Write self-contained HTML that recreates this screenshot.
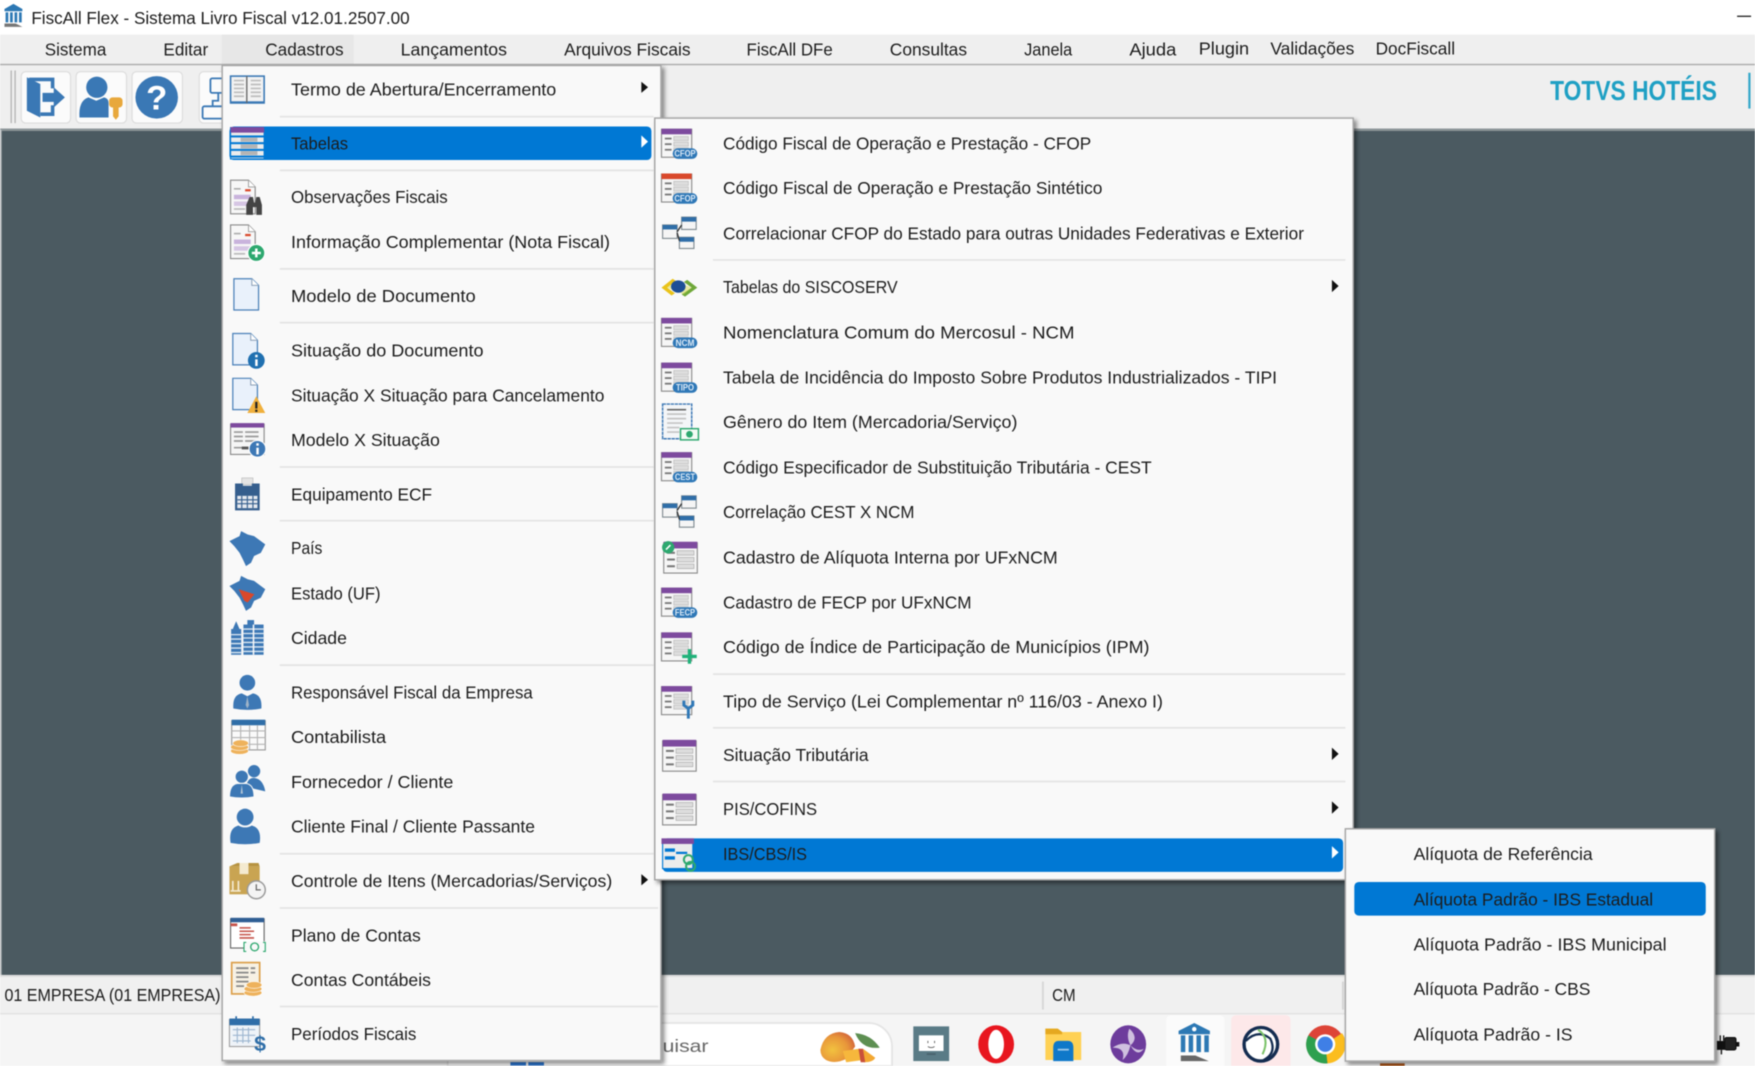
<!DOCTYPE html>
<html lang="pt-BR">
<head>
<meta charset="utf-8">
<title>FiscAll Flex - Sistema Livro Fiscal</title>
<style>
html,body{margin:0;padding:0;width:1755px;height:1066px;overflow:hidden;background:#fff}
svg{display:block;filter:blur(.4px)}
text{font-family:"Liberation Sans",sans-serif;font-size:16px;fill:#1c1c1c}
</style>
</head>
<body>
<svg xmlns="http://www.w3.org/2000/svg" width="1755" height="1066" viewBox="0 0 1568 952.4" preserveAspectRatio="none">
<defs>
<filter id="sh" x="-5%" y="-5%" width="110%" height="110%"><feDropShadow dx="2.5" dy="2.5" stdDeviation="2" flood-color="#000" flood-opacity=".45"/></filter>
<radialGradient id="mg" cx=".35" cy=".6" r=".8"><stop offset="0" stop-color="#f2c23f"/><stop offset=".55" stop-color="#e8963a"/><stop offset="1" stop-color="#c9503a"/></radialGradient>
<g id="tb">
 <rect x="-15" y="-12.5" width="27" height="25" fill="#f6f6f6" stroke="#8a8a8a"/>
 <rect x="-15" y="-13" width="27" height="5" fill="currentColor"/>
 <g fill="#777"><rect x="-12" y="-5" width="6" height="1.6"/><rect x="-12" y="0" width="6" height="1.6"/><rect x="-12" y="5" width="6" height="1.6"/></g>
 <g fill="#ddd" stroke="#bbb" stroke-width=".6"><rect x="-4" y="-6" width="13" height="3.6"/><rect x="-4" y="-1" width="13" height="3.6"/><rect x="-4" y="4" width="13" height="3.6"/></g>
</g>
<g id="bd"><rect x="-5" y="4.5" width="22" height="9.5" rx="4.7" fill="#2f78b7"/></g>
<g id="tw">
 <rect x="-15" y="-13" width="30" height="27" fill="#f6f6f6" stroke="#8a8a8a"/>
 <rect x="-15" y="-14" width="30" height="6" fill="#7d4a9e"/>
 <g fill="#777"><rect x="-12" y="-5" width="7" height="1.8"/><rect x="-12" y="1" width="7" height="1.8"/><rect x="-12" y="7" width="7" height="1.8"/></g>
 <g fill="#ddd" stroke="#aaa" stroke-width=".6"><rect x="-3" y="-6" width="15" height="4"/><rect x="-3" y="0" width="15" height="4"/><rect x="-3" y="6" width="15" height="4"/></g>
</g>
<g id="link">
 <g fill="#f5f5f5" stroke="#7f8a90"><rect x="-15" y="-7" width="13" height="12"/><rect x="2" y="-14" width="13" height="11"/><rect x="0" y="4" width="13" height="10"/></g>
 <g fill="#2f6ea8"><rect x="-15" y="-7" width="13" height="4"/><rect x="2" y="-14" width="13" height="4"/><rect x="0" y="4" width="13" height="4"/></g>
 <path d="M-2,-1 L2,-7 M-2,0 L0,7" stroke="#333" stroke-width="1.2" fill="none"/>
</g>
<g id="doc">
 <path d="M-12,-15 H4 L10,-9 V13 H-12 Z" fill="#e9f1fb" stroke="#4a80b8" stroke-width="1.1"/>
 <path d="M4,-15 V-9 H10" fill="#fff" stroke="#8a9eb5" stroke-width=".9"/>
</g>
<g id="dl">
 <path d="M-14,-15 H2 L8,-9 V15 H-14 Z" fill="#f7f7f7" stroke="#8a8a8a"/>
 <path d="M2,-15 V-9 H8" fill="#fff" stroke="#999" stroke-width=".8"/>
 <rect x="-11" y="-8" width="6" height="1.4" fill="#aaa"/><rect x="-1" y="-7" width="5" height="2" fill="#d9482b"/>
 <rect x="-11" y="-2" width="15" height="4" fill="#c9b3dc"/><rect x="-11" y="4" width="15" height="4" fill="#d6c6e4"/><rect x="-11" y="10" width="10" height="1.5" fill="#bbb"/>
</g>
<path id="br" d="M-16,-6.5 L-7,-11 L-5.600,-15.500 L.3,-12.500 L6,-11 L16,-3.600 L12,4 L6,6.800 L3.300,12.800 L-1.200,15.800 L-4,9.800 L-7,3.900 L-11.600,-2 Z" fill="#3d78b5"/>
<g id="pers">
 <circle cx="0" cy="-9" r="7" fill="#3d78b5"/>
 <path d="M-12.500,14 Q-13.500,2 -5,.5 L0,3 L5,.5 Q13.500,2 12.500,14 Q0,16.500 -12.500,14 Z" fill="#3d78b5"/>
</g>
<g id="coins" fill="#eeb25c" stroke="#fff" stroke-width=".5">
 <ellipse cx="0" cy="6" rx="8" ry="3"/><ellipse cx="0" cy="2.5" rx="8" ry="3"/><ellipse cx="1" cy="-1" rx="7" ry="3"/>
</g>
</defs>

<!-- base -->
<rect width="1568" height="31" fill="#fff"/>
<rect y="31" width="1568" height="26" fill="#efefef"/>
<rect x="198" y="31" width="118" height="27" fill="#e7e7e7"/>
<rect y="57" width="1568" height="1.4" fill="#acacac"/>
<rect y="58.4" width="1568" height="57" fill="#efefef"/>
<rect y="115" width="1568" height="757" fill="#4b5a61"/>
<rect y="115" width="1568" height="2" fill="#8d9598"/>
<rect y="116" width="1.5" height="756" fill="#b8bcbe"/>
<rect y="871" width="1568" height="2.5" fill="#dfdfdf"/>
<rect y="873" width="1568" height="32" fill="#f0f0f0"/>
<rect y="905" width="1568" height="1.6" fill="#e3e3e3"/>
<rect y="906.500" width="1568" height="46" fill="#f5f5f5"/>

<!-- title -->
<path d="M4,8 L12,3.500 L20,8 V10 H4 Z" fill="#2c78b4"/>
<g fill="#2c78b4"><rect x="5" y="11" width="2.400" height="9"/><rect x="9" y="11" width="2.400" height="9"/><rect x="13" y="11" width="2.400" height="9"/><rect x="17" y="11" width="2.400" height="9"/></g>
<path d="M4,21 H14 L20,24 H4 Z" fill="#777"/>
<text x="28" y="21.500" textLength="338" lengthAdjust="spacingAndGlyphs">FiscAll Flex - Sistema Livro Fiscal v12.01.2507.00</text>
<rect x="1552" y="14" width="12.500" height="1.100" fill="#111"/>

<!-- menubar -->
<text x="40" y="49.500" textLength="55" lengthAdjust="spacingAndGlyphs">Sistema</text>
<text x="146" y="49.500" textLength="40" lengthAdjust="spacingAndGlyphs">Editar</text>
<text x="237" y="49.500" textLength="70" lengthAdjust="spacingAndGlyphs">Cadastros</text>
<text x="358" y="49.500" textLength="95" lengthAdjust="spacingAndGlyphs">Lançamentos</text>
<text x="504" y="49.500" textLength="113" lengthAdjust="spacingAndGlyphs">Arquivos Fiscais</text>
<text x="667" y="49.500" textLength="77" lengthAdjust="spacingAndGlyphs">FiscAll DFe</text>
<text x="795" y="49.500" textLength="69" lengthAdjust="spacingAndGlyphs">Consultas</text>
<text x="915" y="49.500" textLength="43" lengthAdjust="spacingAndGlyphs">Janela</text>
<text x="1009" y="49.500" textLength="42" lengthAdjust="spacingAndGlyphs">Ajuda</text>
<text x="1071" y="48.500" textLength="45" lengthAdjust="spacingAndGlyphs">Plugin</text>
<text x="1135" y="48.500" textLength="75" lengthAdjust="spacingAndGlyphs">Validações</text>
<text x="1229" y="48.500" textLength="71" lengthAdjust="spacingAndGlyphs">DocFiscall</text>

<!-- toolbar -->
<path d="M10,63 V110 M13.500,63 V110" stroke="#b4b4b4" stroke-width="1.200"/>
<g fill="#fbfbfb" stroke="#dcdcdc">
 <rect x="19" y="64" width="44" height="46" rx="4"/>
 <rect x="68" y="64" width="45" height="46" rx="4"/>
 <rect x="118" y="64" width="45" height="46" rx="4"/>
 <rect x="178" y="64" width="40" height="46" rx="4"/>
</g>
<path d="M26,71 H47 V79 M47,94 V102 H36" fill="none" stroke="#3a78b5" stroke-width="3.200"/>
<polygon points="24,69 36,75 36,105 24,99" fill="#3a78b5"/>
<polygon points="38,83 48,83 48,78 58,87 48,96 48,91 38,91" fill="#3a78b5"/>
<circle cx="86.500" cy="78" r="9.500" fill="#3a78b5"/>
<path d="M71,105 Q70,90 79,87 L86,90 L93,87 Q97,88 97,92 V105 Z" fill="#3a78b5"/>
<rect x="97.500" y="87" width="12" height="9" rx="3" fill="#e8a83c"/>
<path d="M101,95 H106 V104 L103.500,107 L101,104 Z" fill="#e8a83c"/>
<circle cx="140" cy="87" r="19" fill="#3a78b5"/>
<text x="140" y="98" text-anchor="middle" style="font-size:31px;font-weight:bold;fill:#fff">?</text>
<g fill="none" stroke="#3a78b5" stroke-width="1.600"><rect x="188" y="70" width="14" height="13" rx="1.500"/><rect x="181" y="95" width="20" height="11" rx="1.500"/><path d="M195,83 V90 H190 V95"/></g>
<text x="1385" y="89.500" textLength="149" lengthAdjust="spacingAndGlyphs" style="font-size:25px;font-weight:bold;fill:#1fa0c4">TOTVS HOTÉIS</text>
<rect x="1562" y="65" width="2" height="32" fill="#35a8c9"/>

<!-- status bar -->
<text x="4" y="894.500" textLength="193" lengthAdjust="spacingAndGlyphs">01 EMPRESA (01 EMPRESA)</text>
<rect x="931" y="877" width="1.600" height="25" fill="#d5d5d5"/>
<text x="940" y="894.500" textLength="21" lengthAdjust="spacingAndGlyphs">CM</text>
<rect x="1199" y="877" width="1.600" height="25" fill="#d5d5d5"/>

<!-- taskbar -->
<path d="M400,952.400 V914 H776 A21,21 0 0 1 797,935 V952.400 Z" fill="#fff" stroke="#e4e4e4" stroke-width="1.600"/>
<text x="592" y="940" textLength="41" lengthAdjust="spacingAndGlyphs" style="fill:#666">uisar</text>
<path d="M733,938 Q736,923 750,922 Q762,923 764,935 L756,946 Q746,951 738,947 Q733,944 733,938 Z" fill="url(#mg)"/>
<path d="M764,923 Q778,924 786,936 Q770,938 764,923 Z" fill="#5d8f52"/>
<path d="M753,939 L768,937 L771,947 L756,949 Z" fill="#f6b73c"/>
<path d="M771,937 L782,945 Q780,949 772,949 Z" fill="#f3a832"/>
<path d="M767,937 L771,937 L773,949 L769,949 Z" fill="#c9503a"/>
<rect x="816" y="917" width="32" height="31" fill="#5a7b86"/>
<rect x="821" y="925" width="22" height="14" fill="#fff"/>
<path d="M829,930 v2 M835,930 v2 M829,935 q3,2 6,0" stroke="#444" stroke-width=".7" fill="none"/>
<rect x="828" y="941" width="8" height="1.500" fill="#48626c"/>
<ellipse cx="890" cy="933" rx="16" ry="17" fill="#e8161f"/>
<ellipse cx="890" cy="933" rx="7" ry="13" fill="#fff"/>
<path d="M934,919 H945 L949,922 H966 V947 H934 Z" fill="#ffd154"/>
<path d="M934,919 H945 L949,922 V924 H934 Z" fill="#e5a820"/>
<path d="M941,936 Q941,930 946,930 H954 Q959,930 959,936 V948 H941 Z" fill="#0f78c9"/>
<rect x="945" y="937" width="10" height="1.600" fill="#fff" opacity=".6"/>
<ellipse cx="1008" cy="933" rx="16" ry="17" fill="#6d3c9c"/>
<path d="M1009,919 Q1018,927 1010,934 Q1006,926 1009,919 Z M994,936 Q1003,930 1010,934 Q1008,943 1003,947 Q1006,936 994,936 Z M1010,934 Q1016,940 1022,937 Q1016,945 1010,934 Z" fill="#cfc0df"/>
<path d="M1042,952.400 V912 Q1042,907 1047,907 H1089 Q1094,907 1094,912 V952.400 Z" fill="#fbfbfb"/>
<path d="M1053,921 L1067,914 L1081,921 V924 H1053 Z" fill="#2c78b4"/>
<circle cx="1067" cy="919.500" r="2" fill="#fff"/>
<g fill="#2c78b4"><rect x="1055" y="925" width="4" height="15"/><rect x="1062" y="925" width="4" height="15"/><rect x="1069" y="925" width="4" height="15"/><rect x="1076" y="925" width="4" height="15"/></g>
<path d="M1055,943 H1068 L1080,948 H1055 Z" fill="#666"/>
<path d="M1100,952.400 V912 Q1100,907 1105,907 H1148 Q1153,907 1153,912 V952.400 Z" fill="#fde8e9"/>
<circle cx="1126.500" cy="933" r="15" fill="#fff" stroke="#142c50" stroke-width="3"/>
<path d="M1113,930 Q1124,919 1135,928 Q1141,941 1129,947" fill="none" stroke="#142c50" stroke-width="2"/>
<path d="M1124,920 Q1135,927 1128,942" fill="none" stroke="#7cc36a" stroke-width="1.800"/>
<circle cx="1184" cy="933" r="17" fill="#dd4437"/>
<path d="M1184,933 L1199,923 A17,17 0 0 1 1186,950 Z" fill="#fbbd1f"/>
<path d="M1184,933 L1186,950 A17,17 0 0 1 1169,925 Z" fill="#2ea04f"/>
<circle cx="1184" cy="933" r="9" fill="#fff"/>
<circle cx="1184" cy="933" r="6.800" fill="#3f7fe6"/>
<rect x="456" y="949" width="14" height="3" fill="#2c78d4"/><rect x="472" y="949" width="14" height="3" fill="#2c78d4"/>
<rect x="1233" y="950" width="22" height="2.400" fill="#b0591d"/>
<path d="M1534,930 h8 v8 h-8 z" fill="#111"/><rect x="1541" y="927" width="10" height="11" rx="1.500" fill="#222" stroke="#111"/><rect x="1551" y="931" width="3" height="4" fill="#111"/><path d="M1537,925 v5 M1540,925 v5 M1538,938 v4" stroke="#111" stroke-width="1.200"/>

<!-- MENU 1 -->
<rect x="198.500" y="58.500" width="392" height="889" fill="#f9f9f9" stroke="#a6a6a6" stroke-width="1.300" filter="url(#sh)"/>
<rect x="205" y="113" width="377" height="30" rx="4" fill="#0078d4"/>
<g fill="#e3e3e3">
 <rect x="250" y="103.500" width="334" height="1.500"/><rect x="250" y="151.500" width="334" height="1.500"/><rect x="250" y="239.500" width="334" height="1.500"/><rect x="250" y="287.500" width="334" height="1.500"/><rect x="250" y="416.500" width="334" height="1.500"/><rect x="250" y="464.500" width="334" height="1.500"/><rect x="250" y="593.500" width="334" height="1.500"/><rect x="250" y="762" width="334" height="1.500"/><rect x="250" y="810.500" width="338" height="1.500"/><rect x="250" y="898.500" width="338" height="1.500"/>
</g>
<text x="260" y="85.500" textLength="237" lengthAdjust="spacingAndGlyphs">Termo de Abertura/Encerramento</text>
<text x="260" y="133.500" textLength="51" lengthAdjust="spacingAndGlyphs">Tabelas</text>
<text x="260" y="181.500" textLength="140" lengthAdjust="spacingAndGlyphs">Observações Fiscais</text>
<text x="260" y="221.500" textLength="285" lengthAdjust="spacingAndGlyphs">Informação Complementar (Nota Fiscal)</text>
<text x="260" y="270" textLength="165" lengthAdjust="spacingAndGlyphs">Modelo de Documento</text>
<text x="260" y="318.500" textLength="172" lengthAdjust="spacingAndGlyphs">Situação do Documento</text>
<text x="260" y="358.500" textLength="280" lengthAdjust="spacingAndGlyphs">Situação X Situação para Cancelamento</text>
<text x="260" y="398.500" textLength="133" lengthAdjust="spacingAndGlyphs">Modelo X Situação</text>
<text x="260" y="447" textLength="126" lengthAdjust="spacingAndGlyphs">Equipamento ECF</text>
<text x="260" y="495" textLength="28" lengthAdjust="spacingAndGlyphs">País</text>
<text x="260" y="535.500" textLength="80" lengthAdjust="spacingAndGlyphs">Estado (UF)</text>
<text x="260" y="575.500" textLength="50" lengthAdjust="spacingAndGlyphs">Cidade</text>
<text x="260" y="624" textLength="216" lengthAdjust="spacingAndGlyphs">Responsável Fiscal da Empresa</text>
<text x="260" y="664" textLength="85" lengthAdjust="spacingAndGlyphs">Contabilista</text>
<text x="260" y="704" textLength="145" lengthAdjust="spacingAndGlyphs">Fornecedor / Cliente</text>
<text x="260" y="744" textLength="218" lengthAdjust="spacingAndGlyphs">Cliente Final / Cliente Passante</text>
<text x="260" y="792.500" textLength="287" lengthAdjust="spacingAndGlyphs">Controle de Itens (Mercadorias/Serviços)</text>
<text x="260" y="841" textLength="116" lengthAdjust="spacingAndGlyphs">Plano de Contas</text>
<text x="260" y="881" textLength="125" lengthAdjust="spacingAndGlyphs">Contas Contábeis</text>
<text x="260" y="929" textLength="112" lengthAdjust="spacingAndGlyphs">Períodos Fiscais</text>
<polygon points="573,73 579,78 573,83" fill="#111"/>
<polygon points="573,121 579,126.500 573,132" fill="#fff"/>
<polygon points="573,781 579,786 573,791" fill="#111"/>

<!-- menu1 icons -->
<g transform="translate(221,80)"><rect x="-15" y="-12" width="30" height="24" fill="#f2f2f2" stroke="#3a78b5" stroke-width="1.400"/><rect x="-15" y="10.500" width="30" height="2" fill="#3a78b5"/><path d="M-.5,-12 V12" stroke="#666" stroke-width="1.200"/><path d="M-12,-8 H-3 M-12,-4.500 H-3 M-12,-1 H-3 M-12,2.500 H-3 M-12,6 H-3 M3,-8 H12 M3,-4.500 H12 M3,-1 H12 M3,2.500 H12 M3,6 H12" stroke="#bdbdbd" stroke-width="1.500"/></g>
<g transform="translate(221,128)"><rect x="-15" y="-14" width="30" height="28" fill="#ececec" stroke="#0078d4"/><rect x="-15" y="-14.500" width="30" height="5" fill="#7d4a9e"/><g fill="#0078d4"><rect x="-15" y="-7" width="30" height="1.800"/><rect x="-15" y="-1" width="30" height="1.800"/><rect x="-15" y="5" width="30" height="1.800"/><rect x="-15" y="11" width="30" height="1.800"/></g><g fill="#b4b4b4"><rect x="-6" y="-5" width="15" height="3.600"/><rect x="-6" y="1" width="15" height="3.600"/><rect x="-6" y="7" width="15" height="3.600"/></g></g>
<g transform="translate(220,176)"><use href="#dl"/><path d="M0,16 V7 L3,0 H6 L7,5 H8 L9,0 H12 L14,7 V16 H9 V9 H6 V16 Z" fill="#444"/></g>
<g transform="translate(220,216)"><use href="#dl"/><circle cx="9" cy="10" r="7.600" fill="#2da86f" stroke="#fff"/><path d="M9,6 V14 M5,10 H13" stroke="#fff" stroke-width="2.200"/></g>
<g transform="translate(221,264)"><use href="#doc"/></g>
<g transform="translate(220,313)"><use href="#doc"/><circle cx="9" cy="9" r="7.500" fill="#2070b0"/><rect x="8" y="8" width="2.200" height="6" fill="#fff"/><rect x="8" y="4" width="2.200" height="2.200" fill="#fff"/></g>
<g transform="translate(220,353)"><use href="#doc"/><polygon points="9,1 17,16 1,16" fill="#f0b03c"/><rect x="8" y="6" width="2" height="6" fill="#222"/><rect x="8" y="13" width="2" height="2" fill="#222"/></g>
<g transform="translate(221,393)"><rect x="-15" y="-14" width="30" height="27" fill="#f6f6f6" stroke="#8a8a8a"/><rect x="-15" y="-15" width="30" height="4" fill="#7d4a9e"/><path d="M-12,-7 H-4 M-2,-7 H10 M-12,-3 H-4 M-2,-3 H10 M-12,1 H-4 M-2,1 H10 M-12,7 H-4" stroke="#999" stroke-width="1.500"/><rect x="-5" y="6" width="6" height="2.500" fill="#555"/><circle cx="9" cy="8" r="7.500" fill="#3d78b5" stroke="#fff"/><rect x="8" y="7" width="2.200" height="6" fill="#fff"/><rect x="8" y="3" width="2.200" height="2.200" fill="#fff"/></g>
<g transform="translate(221,441)"><rect x="-5" y="-14" width="10" height="6" fill="#e4e4e4" stroke="#bbb" stroke-width=".6"/><path d="M-11,-9 H-4 V-7 H4 V-9 H11 V15 H-11 Z" fill="#355e8d"/><rect x="-9" y="2" width="18" height="11" fill="#e5e9ef"/><path d="M-9,5.500 H9 M-9,9 H9 M-5,2 V13 M0,2 V13 M5,2 V13" stroke="#355e8d"/></g>
<g transform="translate(221,490)"><use href="#br"/></g>
<g transform="translate(221,530)"><use href="#br"/><path d="M-7.700,-3.600 L6.300,.9 L.3,8.300 L-2.700,6.800 Z" fill="#d9482b"/></g>
<g transform="translate(221,570)"><g fill="#3d78b5"><rect x="-14.500" y="-8" width="9" height="23"/><path d="M-13,-8 L-10,-15 L-7,-8 Z"/><rect x="-3.500" y="-12" width="18" height="27"/><rect x="0" y="-16" width="6" height="5"/></g><path d="M-14.500,-3 H-5.500 M-14.500,1 H-5.500 M-14.500,5 H-5.500 M-14.500,9 H-5.500 M-14.500,13 H-5.500 M-3.500,-8 H14.500 M-3.500,-4 H14.500 M-3.500,0 H14.500 M-3.500,4 H14.500 M-3.500,8 H14.500 M-3.500,12 H14.500" stroke="#dde8f3" stroke-width="1.200"/><path d="M5.500,-12 V15" stroke="#f9f9f9" stroke-width="1.400"/></g>
<g transform="translate(221,619)"><use href="#pers"/><path d="M0,3 L-1.500,11 L0,14 L1.500,11 Z" fill="#9fb4c8"/></g>
<g transform="translate(221,658)"><rect x="-14" y="-14" width="30" height="26" fill="#fafafa" stroke="#999"/><rect x="-14" y="-15" width="30" height="5" fill="#2f6ea8"/><path d="M-14,-5 H16 M-14,1 H16 M-14,7 H16 M-6,-10 V12 M2,-10 V12 M9,-10 V12" stroke="#b5b5b5"/><use href="#coins" transform="translate(-7,7)"/></g>
<g transform="translate(221,698)"><circle cx="6" cy="-9" r="5.500" fill="#3d78b5"/><path d="M-1,5 Q0,-3 6,-3 Q14,-2 16,9 Z" fill="#3d78b5"/><circle cx="-5" cy="-4" r="6" fill="#3d78b5" stroke="#f9f9f9"/><path d="M-16,14 Q-16,3 -9,2 H-1 Q6,3 6,14 Q-5,16 -16,14 Z" fill="#3d78b5" stroke="#f9f9f9"/><path d="M-5,3 L-6,11 L-4,11 Z" fill="#b5c6d6"/></g>
<g transform="translate(219,738)"><circle cx="0" cy="-8" r="7.500" fill="#3d78b5"/><path d="M-13,15 Q-15,2 -6,-.5 Q0,3 6,-.5 Q15,2 13,15 Q0,17.500 -13,15 Z" fill="#3d78b5"/></g>
<g transform="translate(220,786)"><rect x="-15" y="-12" width="27" height="25" fill="#c9a452"/><path d="M-15,-12 L-8,-15 H11 L12,-12 Z" fill="#b79341"/><rect x="-6" y="-15" width="8" height="10" fill="#f4ead0"/><path d="M-12,1 V10 M-7,1 V10 M-14,10 H-5" stroke="#f4ead0" stroke-width="1.500"/><circle cx="9" cy="9" r="8" fill="#f4f4f4" stroke="#9a9a9a" stroke-width="1.300"/><path d="M9,4 V9 H13" stroke="#666" fill="none" stroke-width="1.100"/></g>
<g transform="translate(221,835)"><rect x="-15" y="-14" width="30" height="26" fill="#fff" stroke="#666"/><rect x="-15" y="-15" width="30" height="4" fill="#2f5e94"/><rect x="-15" y="-10" width="6" height="2.500" fill="#c5534a"/><path d="M-7,-6 H3 M-7,-3 H6 M-7,0 H3 M-7,3 H6" stroke="#c5534a" stroke-width="1.400"/><rect x="-3" y="6" width="20" height="9" fill="#f9f9f9"/><path d="M-1,7 H-3 V15 H-1 M14,7 H16 V15 H14" stroke="#2da86f" fill="none"/><circle cx="6.500" cy="11" r="3.500" fill="none" stroke="#2da86f" stroke-width="1.200"/></g>
<g transform="translate(220,875)"><rect x="-13" y="-15" width="25" height="28" fill="#f7f1e4" stroke="#dc9f4a" stroke-width="1.500"/><path d="M-9,-10 H2 M4,-10 H8 M-9,-6 H2 M4,-6 H8 M-9,-2 H2 M-9,2 H2 M-9,6 H-2" stroke="#888" stroke-width="1.600"/><use href="#coins" transform="translate(6,6)"/></g>
<g transform="translate(220,923)"><rect x="-15" y="-12" width="27" height="24" fill="#eef3f8" stroke="#a0a0a0"/><rect x="-15" y="-13" width="27" height="6" fill="#2f6ea8"/><path d="M-9,-15 V-11 M6,-15 V-11" stroke="#2f6ea8" stroke-width="1.500"/><path d="M-12,-3 H8 M-12,2 H8 M-12,7 H4 M-8,-5 V9 M-3,-5 V9 M2,-5 V9" stroke="#9db6d0"/><text x="7" y="16" style="font-size:19px;font-weight:bold;fill:#2f6ea8">$</text></g>

<!-- MENU 2 -->
<rect x="585" y="105.500" width="624" height="680.500" fill="#f9f9f9" stroke="#a6a6a6" stroke-width="1.300" filter="url(#sh)"/>
<rect x="592" y="749" width="608" height="30" rx="4" fill="#0078d4"/>
<g fill="#e3e3e3"><rect x="637" y="231.500" width="565" height="1.500"/><rect x="637" y="601.500" width="565" height="1.500"/><rect x="637" y="649.500" width="565" height="1.500"/><rect x="637" y="697.500" width="565" height="1.500"/></g>
<text x="646" y="133.500" textLength="329" lengthAdjust="spacingAndGlyphs">Código Fiscal de Operação e Prestação - CFOP</text>
<text x="646" y="173.500" textLength="339" lengthAdjust="spacingAndGlyphs">Código Fiscal de Operação e Prestação Sintético</text>
<text x="646" y="214" textLength="519" lengthAdjust="spacingAndGlyphs">Correlacionar CFOP do Estado para outras Unidades Federativas e Exterior</text>
<text x="646" y="262" textLength="156" lengthAdjust="spacingAndGlyphs">Tabelas do SISCOSERV</text>
<text x="646" y="302.500" textLength="314" lengthAdjust="spacingAndGlyphs">Nomenclatura Comum do Mercosul  - NCM</text>
<text x="646" y="342.500" textLength="495" lengthAdjust="spacingAndGlyphs">Tabela de Incidência do Imposto Sobre Produtos Industrializados - TIPI</text>
<text x="646" y="382.500" textLength="263" lengthAdjust="spacingAndGlyphs">Gênero do Item (Mercadoria/Serviço)</text>
<text x="646" y="423" textLength="383" lengthAdjust="spacingAndGlyphs">Código Especificador de Substituição Tributária - CEST</text>
<text x="646" y="463" textLength="171" lengthAdjust="spacingAndGlyphs">Correlação CEST X NCM</text>
<text x="646" y="503.500" textLength="299" lengthAdjust="spacingAndGlyphs">Cadastro de Alíquota Interna por UFxNCM</text>
<text x="646" y="543.500" textLength="222" lengthAdjust="spacingAndGlyphs">Cadastro de FECP por UFxNCM</text>
<text x="646" y="583.500" textLength="381" lengthAdjust="spacingAndGlyphs">Código de Índice de Participação de Municípios (IPM)</text>
<text x="646" y="632" textLength="393" lengthAdjust="spacingAndGlyphs">Tipo de Serviço (Lei Complementar nº 116/03 - Anexo I)</text>
<text x="646" y="680" textLength="130" lengthAdjust="spacingAndGlyphs">Situação Tributária</text>
<text x="646" y="728" textLength="84" lengthAdjust="spacingAndGlyphs">PIS/COFINS</text>
<text x="646" y="768.500" textLength="75" lengthAdjust="spacingAndGlyphs">IBS/CBS/IS</text>
<polygon points="1190,250 1196,255.500 1190,261" fill="#111"/>
<polygon points="1190,668 1196,673.500 1190,679" fill="#111"/>
<polygon points="1190,716 1196,721.500 1190,727" fill="#111"/>
<polygon points="1190,756 1196,761.500 1190,767" fill="#fff"/>

<!-- menu2 icons -->
<g transform="translate(606,128)" color="#7d4a9e"><use href="#tb"/><use href="#bd"/><text x="6" y="12" text-anchor="middle" textLength="19" lengthAdjust="spacingAndGlyphs" style="font-size:8px;font-weight:bold;fill:#dbe9f6">CFOP</text></g>
<g transform="translate(606,168)" color="#d9482b"><use href="#tb"/><use href="#bd"/><text x="6" y="12" text-anchor="middle" textLength="19" lengthAdjust="spacingAndGlyphs" style="font-size:8px;font-weight:bold;fill:#dbe9f6">CFOP</text></g>
<g transform="translate(607,208)"><use href="#link"/></g>
<g transform="translate(607,256)"><path d="M-16,1 L-6,-7 L-3,-5 L-11,1 L-4,6 L-7,8 Z" fill="#eac31a"/><path d="M16,1 L5,9 L2,7 L11,1 L4,-4 L7,-6 Z" fill="#6fa83a"/><path d="M-11,1 L-4,-5 L11,1 L4,7 Z" fill="#d5d94a" opacity=".5"/><ellipse cx="-1" cy="0" rx="6.500" ry="5.500" fill="#1d4f96"/></g>
<g transform="translate(606,297)" color="#7d4a9e"><use href="#tb"/><use href="#bd"/><text x="6" y="12" text-anchor="middle" textLength="17" lengthAdjust="spacingAndGlyphs" style="font-size:8px;font-weight:bold;fill:#dbe9f6">NCM</text></g>
<g transform="translate(606,337)" color="#7d4a9e"><use href="#tb"/><use href="#bd"/><text x="6" y="12" text-anchor="middle" textLength="16" lengthAdjust="spacingAndGlyphs" style="font-size:8px;font-weight:bold;fill:#dbe9f6">TIPO</text></g>
<g transform="translate(606,377)"><rect x="-14" y="-16" width="26" height="31" fill="#f4f6f8" stroke="#3d78b5" stroke-width="1.300" stroke-dasharray="3 .6"/><path d="M-10,-11 H7" stroke="#666" stroke-width="1.500"/><path d="M-10,-7 H7 M-10,-3 H7 M-10,1 H4 M-10,5 H1 M-10,9 H1" stroke="#c4c4c4" stroke-width="1.500"/><rect x="2" y="6" width="16" height="10" fill="#f3fbf5" stroke="#2da86f" stroke-width="1.300"/><circle cx="10" cy="11" r="3" fill="#2da86f"/></g>
<g transform="translate(606,417)" color="#7d4a9e"><use href="#tb"/><use href="#bd"/><text x="6" y="12" text-anchor="middle" textLength="18" lengthAdjust="spacingAndGlyphs" style="font-size:8px;font-weight:bold;fill:#dbe9f6">CEST</text></g>
<g transform="translate(607,457)"><use href="#link"/></g>
<g transform="translate(608,498)"><use href="#tw"/><circle cx="-11" cy="-9" r="5.500" fill="#2da86f"/><path d="M-13,-7 L-9,-11" stroke="#fff" stroke-width="1.400"/></g>
<g transform="translate(606,538)" color="#7d4a9e"><use href="#tb"/><use href="#bd"/><text x="6" y="12" text-anchor="middle" textLength="18" lengthAdjust="spacingAndGlyphs" style="font-size:8px;font-weight:bold;fill:#dbe9f6">FECP</text></g>
<g transform="translate(606,578)" color="#7d4a9e"><use href="#tb"/><path d="M10,2 V15 M3.500,8.500 H16.500" stroke="#20b27a" stroke-width="3"/></g>
<g transform="translate(606,626)" color="#7d4a9e"><use href="#tb"/><path d="M9,16 V6 M5,0 V4 L9,7 L13,4 V0" fill="none" stroke="#2f78b7" stroke-width="2.600"/></g>
<g transform="translate(607,675)"><use href="#tw"/></g>
<g transform="translate(607,723)"><use href="#tw"/></g>
<g transform="translate(606,763)"><rect x="-14" y="-12" width="27" height="25" fill="#ececec" stroke="#0078d4"/><rect x="-15" y="-14" width="29" height="5" fill="#7d4a9e"/><g fill="#0078d4"><rect x="-12" y="-5" width="9" height="3"/><rect x="-12" y="2" width="9" height="3"/><rect x="-2" y="-2" width="10" height="2"/></g><circle cx="9" cy="5" r="4" fill="none" stroke="#2da86f" stroke-width="1.800"/><circle cx="11" cy="11" r="4" fill="none" stroke="#2da86f" stroke-width="1.800"/></g>

<!-- MENU 3 -->
<rect x="1202" y="740.500" width="330" height="207.500" fill="#f9f9f9" stroke="#a6a6a6" stroke-width="1.300" filter="url(#sh)"/>
<rect x="1210" y="788" width="314" height="30" rx="4" fill="#0078d4"/>
<text x="1263" y="768.500" textLength="160" lengthAdjust="spacingAndGlyphs">Alíquota de Referência</text>
<text x="1263" y="809" textLength="214" lengthAdjust="spacingAndGlyphs">Alíquota Padrão - IBS Estadual</text>
<text x="1263" y="849" textLength="226" lengthAdjust="spacingAndGlyphs">Alíquota Padrão - IBS Municipal</text>
<text x="1263" y="889" textLength="158" lengthAdjust="spacingAndGlyphs">Alíquota Padrão - CBS</text>
<text x="1263" y="929.500" textLength="142" lengthAdjust="spacingAndGlyphs">Alíquota Padrão - IS</text>
</svg>
</body>
</html>
